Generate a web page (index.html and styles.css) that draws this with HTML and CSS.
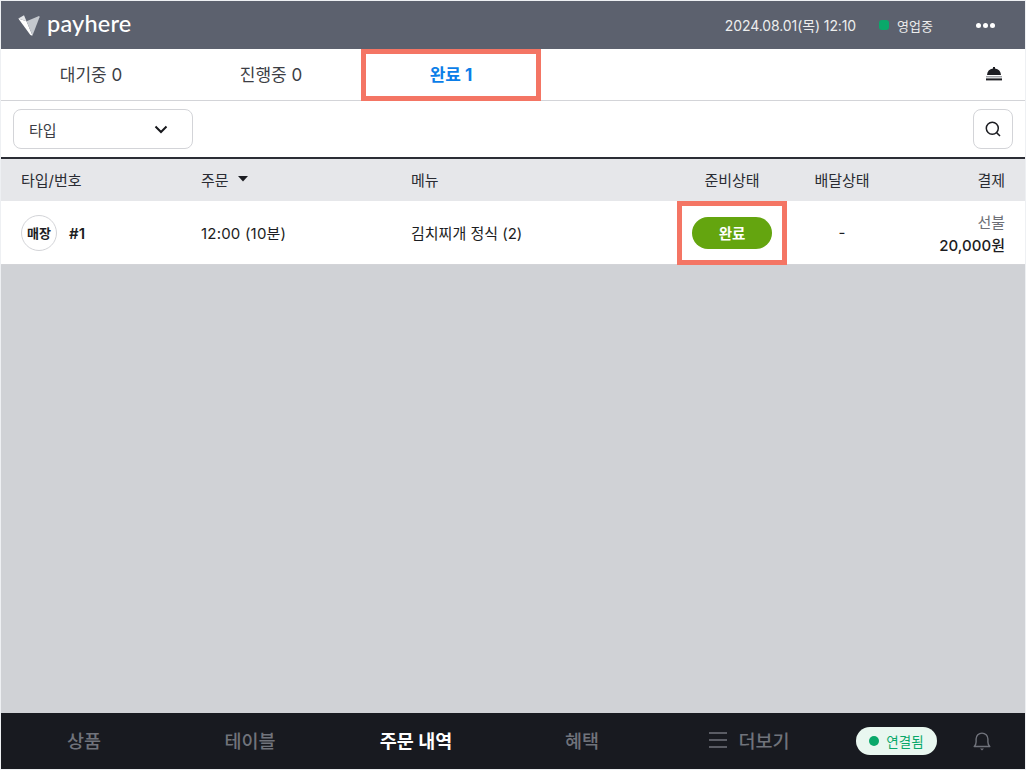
FILE: index.html
```html
<!DOCTYPE html>
<html lang="ko">
<head>
<meta charset="utf-8">
<title>payhere</title>
<link rel="stylesheet" href="styles.css">
</head>
<body>
<div class="app">
  <header class="topbar">
    <div class="brand">
      <svg class="logo" width="22" height="21" viewBox="0 0 22 21"><path d="M0.3 3.6 L8.5 6.2 L14.5 20.5 Q13 20.8 12 19.5 Z" fill="#fff"/><path d="M8.5 6.2 L21 1 Q21.8 1 21.5 2.2 L14.5 20.5 Z" fill="#c4c8ce"/><path d="M0.3 3.6 L6 0.3 L8.5 6.2 Z" fill="#e4e6e9"/></svg>
      <span class="wordmark">payhere</span>
    </div>
    <div class="status">
      <span class="datetime">2024.08.01(목) 12:10</span>
      <span class="open"><i class="dot"></i>영업중</span>
      <span class="more"><i></i><i></i><i></i></span>
    </div>
  </header>
  <nav class="tabs">
    <div class="tab">대기중 0</div>
    <div class="tab">진행중 0</div>
    <div class="tab active">완료 1</div>
    <svg class="bell-desk" width="18" height="16" viewBox="0 0 18 16"><path d="M8 1h2v1.6A7 7 0 0 1 16 9H2A7 7 0 0 1 8 2.6z" fill="#1c1d22"/><rect x="1" y="10.2" width="16" height="1.2" fill="#8c8e94"/><rect x="1" y="12.4" width="16" height="2" fill="#1c1d22"/></svg>
  </nav>
  <div class="filters">
    <div class="select"><span>타입</span>
      <svg width="14" height="9" viewBox="0 0 14 9"><path d="M1.5 1.5 7 7l5.5-5.5" fill="none" stroke="#17181c" stroke-width="2"/></svg>
    </div>
    <div class="search">
      <svg width="18" height="18" viewBox="0 0 18 18"><circle cx="8.3" cy="8.3" r="6" fill="none" stroke="#1c1d22" stroke-width="1.5"/><path d="m12.6 12.6 3.4 3.4" stroke="#1c1d22" stroke-width="1.5"/></svg>
    </div>
  </div>
  <div class="grid head">
    <div>타입/번호</div>
    <div class="sort">주문<svg width="10" height="6" viewBox="0 0 10 6"><path d="M0 0h10L5 5.5z" fill="#1c1d22"/></svg></div>
    <div>메뉴</div>
    <div class="center">준비상태</div>
    <div class="center">배달상태</div>
    <div class="right">결제</div>
  </div>
  <div class="grid row">
    <div class="type"><span class="badge">매장</span><b>#1</b></div>
    <div class="time">12:00 (10분)</div>
    <div>김치찌개 정식 (2)</div>
    <div class="center"><span class="pill">완료</span></div>
    <div class="center">-</div>
    <div class="right pay"><span class="method">선불</span><span class="amount">20,000원</span></div>
  </div>
  <main class="empty"></main>
  <footer class="bottom">
    <div class="nav-item">상품</div>
    <div class="nav-item">테이블</div>
    <div class="nav-item current">주문 내역</div>
    <div class="nav-item">혜택</div>
    <div class="nav-item more-item"><svg width="18" height="16" viewBox="0 0 18 16"><path d="M0 1h18M0 8h18M0 15h18" stroke="#70737b" stroke-width="1.6"/></svg>더보기</div>
    <div class="conn"><i></i>연결됨</div>
    <svg class="bell" width="18" height="20" viewBox="0 0 18 20"><path d="M1.2 15.5c1.4-1.2 1.9-2.4 1.9-4.5V8a5.9 5.9 0 0 1 11.8 0v3c0 2.1.5 3.3 1.9 4.5z" fill="none" stroke="#70737b" stroke-width="1.4" stroke-linejoin="round"/><path d="M7 17.6h4L9 19.4z" fill="#70737b"/></svg>
  </footer>
  <div class="mark mark-tab"></div>
  <div class="mark mark-pill"></div>
</div>
</body>
</html>
```
FILE: styles.css
```css
* { box-sizing: border-box; }
html, body { margin: 0; height: 100%; }
body { font-family: Inter, "Noto Sans CJK KR", sans-serif; color: #1c1d22; background: #eef0f3; }
.app { position: relative; width: 1026px; height: 770px; padding: 1px; display: flex; flex-direction: column; overflow: hidden; }

.topbar { height: 48px; flex: none; background: #5c616e; color: #fff; display: flex; align-items: center; justify-content: space-between; padding: 0 30px 0 17px; }
.brand { display: flex; align-items: center; gap: 7px; }
.logo { display: block; }
.wordmark { font-family: Lato, sans-serif; font-size: 23.5px; font-weight: 500; letter-spacing: 0.2px; line-height: 1; margin-bottom: 2px; }
.status { display: flex; align-items: center; font-size: 14px; color: #eceded; }
.datetime { letter-spacing: -0.1px; }
.open { display: flex; align-items: center; gap: 8px; margin-left: 23px; font-size: 13px; }
.dot { width: 10px; height: 10px; border-radius: 3px; background: #0aa86a; }
.more { display: flex; gap: 2px; margin-left: 43px; }
.more i { width: 5px; height: 5px; border-radius: 50%; background: #fff; }

.tabs { height: 52px; flex: none; background: #fff; border-bottom: 1px solid #d3d4d8; display: flex; align-items: center; position: relative; }
.tab { width: 180px; text-align: center; font-size: 17px; color: #3c3e45; line-height: 51px; padding-top: 1px; }
.tab.active { color: #0b7ee8; font-weight: 700; }
.bell-desk { margin-left: auto; margin-right: 22px; margin-top: -1px; }

.filters { height: 56px; flex: none; background: #fff; display: flex; align-items: center; justify-content: space-between; padding: 0 12px; }
.select { width: 180px; height: 40px; border: 1px solid #d3d4d8; border-radius: 8px; display: flex; align-items: center; justify-content: space-between; padding: 0 24px 0 15px; font-size: 15px; color: #3c3e45; }
.search { width: 40px; height: 40px; border: 1px solid #d3d4d8; border-radius: 8px; display: flex; align-items: center; justify-content: center; }

.grid { display: grid; grid-template-columns: 180px 210px 271px 100px 120px 1fr; flex: none; background: #fff; font-size: 15px; padding: 0 20px; align-items: center; }
.head { height: 44px; background: #e6e7ea; border-top: 2px solid #2b2d35; color: #2a2c33; padding-bottom: 2px; }
.row { height: 64px; border-bottom: 1px solid #d3d4d8; }
.center { text-align: center; }
.right { text-align: right; }
.sort { display: flex; align-items: center; gap: 9px; }
.time { letter-spacing: 0.2px; }
.type { display: flex; align-items: center; gap: 12px; }
.type b { font-weight: 600; padding-top: 1px; }
.badge { width: 36px; height: 36px; border: 1px solid #d3d4d8; border-radius: 50%; display: flex; align-items: center; justify-content: center; font-size: 13px; font-weight: 700; }
.pill { display: inline-flex; width: 80px; height: 32px; border-radius: 16px; background: #64a50f; color: #fff; font-weight: 700; align-items: center; justify-content: center; font-size: 14.5px; }
.pay { display: flex; flex-direction: column; align-items: flex-end; gap: 2px; }
.method { color: #6d6f76; }
.amount { font-weight: 500; letter-spacing: 0.05px; }

.empty { flex: 1; background: #d0d2d6; }

.bottom { height: 56px; flex: none; background: #181a20; display: grid; grid-template-columns: 166px 166px 166px 166px 169px 103px 1fr; align-items: center; font-size: 18.5px; color: #70737b; }
.nav-item { text-align: center; font-weight: 500; padding-bottom: 2px; }
.nav-item.current { color: #fff; font-weight: 700; }
.more-item { display: flex; align-items: center; justify-content: center; gap: 11px; }
.conn { width: 81px; height: 28px; margin-left: 22px; border-radius: 14px; background: #e9f7f0; color: #0aa86a; font-size: 13.5px; display: flex; align-items: center; justify-content: center; gap: 7px; }
.conn i { width: 10px; height: 10px; border-radius: 50%; background: #0aa86a; }
.bell { margin-left: 36px; }

.mark { position: absolute; border: 5px solid #f47564; pointer-events: none; }
.mark-tab { left: 361px; top: 49px; width: 180px; height: 52px; }
.mark-pill { left: 677px; top: 201px; width: 110px; height: 64px; }
```
